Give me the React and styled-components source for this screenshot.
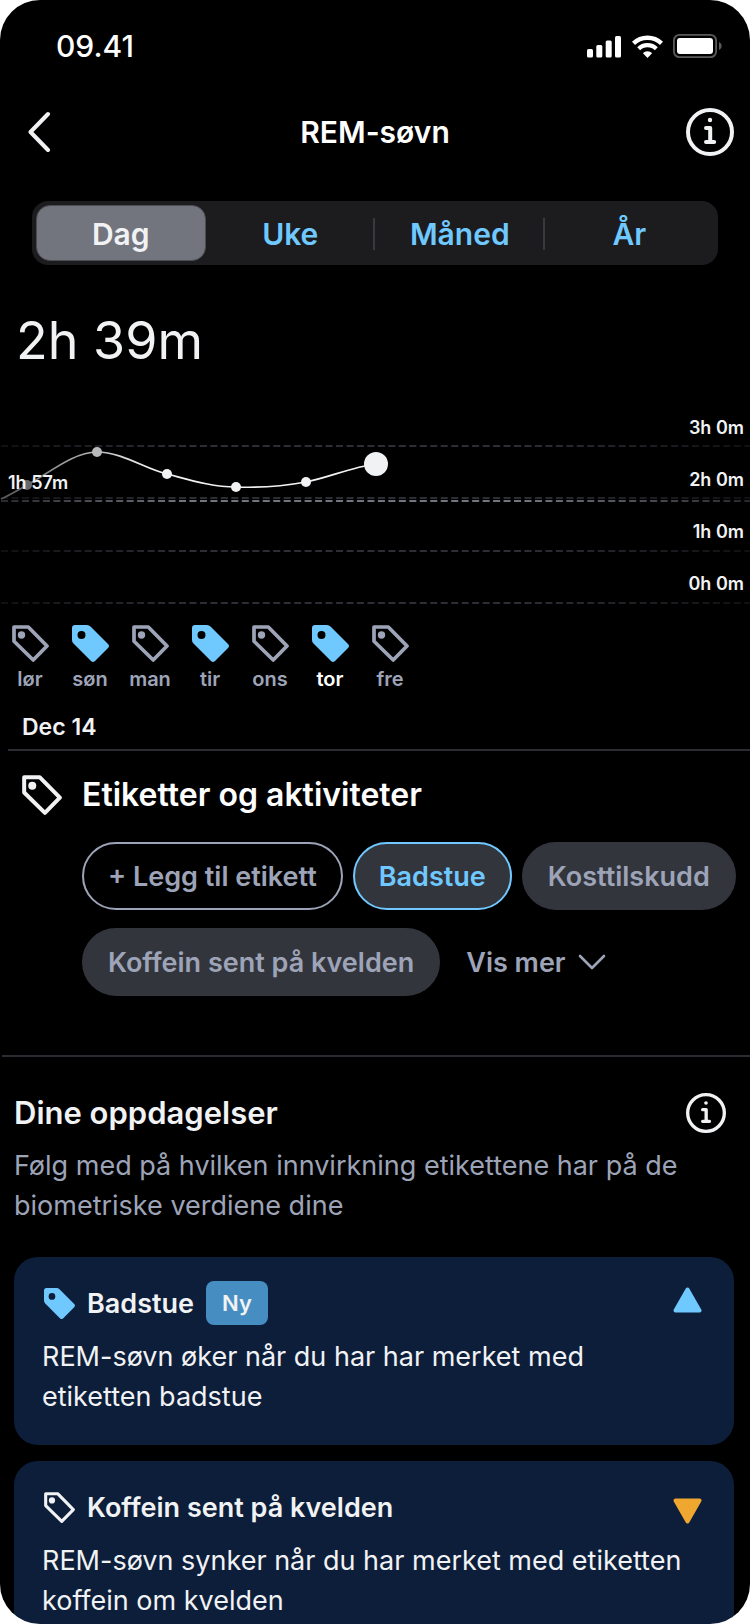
import React, { useState } from "react";
import styled, { createGlobalStyle } from "styled-components";

const PERIODS = ["Dag", "Uke", "Måned", "År"];

const HOURS = ["3h 0m", "2h 0m", "1h 0m", "0h 0m"];

const GRID_LINES = [45, 97, 150, 202];

const POINTS = [
  { x: 27, y: 84, r: 5, color: "#67686a" },
  { x: 97, y: 51, r: 5, color: "#b8b9bb" },
  { x: 167, y: 73, r: 5, color: "#f1f2f4" },
  { x: 236, y: 86, r: 5, color: "#f1f2f4" },
  { x: 306, y: 81, r: 5, color: "#f1f2f4" },
  { x: 376, y: 63, r: 12, color: "#f1f2f4" },
];

const DAYS = [
  { name: "lør", tagged: false },
  { name: "søn", tagged: true },
  { name: "man", tagged: false },
  { name: "tir", tagged: true },
  { name: "ons", tagged: false },
  { name: "tor", tagged: true, current: true },
  { name: "fre", tagged: false },
];

const DISCOVERIES = [
  {
    title: "Badstue",
    text: "REM-søvn øker når du har har merket med etiketten badstue",
    trend: "up",
    isNew: true,
  },
  {
    title: "Koffein sent på kvelden",
    text: "REM-søvn synker når du har merket med etiketten koffein om kvelden",
    trend: "down",
    isNew: false,
  },
];

function TagIcon({ size, filled }) {
  return (
    <svg width={size} height={size} viewBox="0 0 37 37" aria-hidden="true">
      {filled ? (
        <path
          fill="currentColor"
          fillRule="evenodd"
          d="M3 0H15Q17 0 18.500 1.500L36 19Q38 21 36 23L23 36Q21 38 19 36L1.500 18.500Q0 17 0 15V3Q0 0 3 0ZM9.500 6A4 4 0 1 0 9.500 14A4 4 0 1 0 9.500 6Z"
        />
      ) : (
        <>
          <path
            fill="none"
            stroke="currentColor"
            strokeWidth="3.7"
            strokeLinejoin="round"
            d="M2 2H16.300L35 21L21.200 35L2 16.200Z"
          />
          <circle cx="9.500" cy="10" r="3.700" fill="currentColor" />
        </>
      )}
    </svg>
  );
}

function InfoIcon({ size }) {
  return (
    <svg width={size} height={size} viewBox="0 0 48 48" fill="none" aria-hidden="true">
      <circle cx="24" cy="24" r="22" stroke="currentColor" strokeWidth="4" />
      <circle cx="24" cy="12" r="2.2" fill="currentColor" />
      <path
        d="M20 20H24.200V34M20 34H28.200"
        stroke="currentColor"
        strokeWidth="4"
        strokeLinecap="round"
        strokeLinejoin="round"
      />
    </svg>
  );
}

function StatusIcons() {
  return (
    <StatusGroup>
      <svg width="35" height="23" viewBox="0 0 35 23" fill="#fff" aria-hidden="true">
        <rect x="0" y="14" width="6" height="8.500" rx="1.500" />
        <rect x="9.300" y="10" width="6" height="12.500" rx="1.500" />
        <rect x="18.700" y="5.500" width="6" height="17" rx="1.500" />
        <rect x="28" y="1" width="6" height="21.500" rx="1.500" />
      </svg>
      <svg width="31" height="23" viewBox="0 0 31 23" fill="none" aria-hidden="true">
        <clipPath id="wedge">
          <path d="M15.500 23L-7.500 -1H38.500Z" />
        </clipPath>
        <g clipPath="url(#wedge)">
          <circle cx="15.500" cy="23" r="20.300" stroke="#fff" strokeWidth="4.400" />
          <circle cx="15.500" cy="23" r="12.800" stroke="#fff" strokeWidth="4.200" />
          <circle cx="15.500" cy="23" r="6.700" fill="#fff" />
        </g>
      </svg>
      <svg width="49" height="24" viewBox="0 0 49 24" fill="none" aria-hidden="true">
        <rect x="0.900" y="0.900" width="42.200" height="22.200" rx="5.500" stroke="#5a5a5a" strokeWidth="1.800" />
        <rect x="4" y="4" width="36" height="16" rx="3" fill="#fff" />
        <path d="M46 8V16C49.500 14.500 49.500 9.500 46 8Z" fill="#5a5a5a" />
      </svg>
    </StatusGroup>
  );
}

function TrendIcon({ trend }) {
  const up = trend === "up";
  const color = up ? "#6fc9ff" : "#efa730";
  return (
    <svg width="29" height="26" viewBox="0 0 29 26" role="img" aria-label={up ? "Øker" : "Synker"}>
      <path
        d={up ? "M14.500 2.500L26.500 23.500H2.500Z" : "M14.500 23.500L26.500 2.500H2.500Z"}
        fill={color}
        stroke={color}
        strokeWidth="4"
        strokeLinejoin="round"
      />
    </svg>
  );
}

function SleepChart() {
  return (
    <Chart>
      <Plot aria-hidden="true">
        <defs>
          <linearGradient id="edges">
            <stop offset="0" stopColor="#fff" stopOpacity="0.35" />
            <stop offset="0.25" stopColor="#fff" />
            <stop offset="0.7" stopColor="#fff" />
            <stop offset="1" stopColor="#fff" stopOpacity="0.35" />
          </linearGradient>
          <linearGradient id="trend" gradientUnits="userSpaceOnUse" x1="0" y1="0" x2="150" y2="0">
            <stop offset="0" stopColor="#555659" />
            <stop offset="1" stopColor="#f1f2f4" />
          </linearGradient>
          <mask id="fade" maskUnits="userSpaceOnUse" x="0" y="0" width="100%" height="100%">
            <rect width="100%" height="100%" fill="url(#edges)" />
          </mask>
        </defs>
        <g mask="url(#fade)" strokeDasharray="7 3.47" strokeWidth="2">
          {GRID_LINES.map((y) => (
            <line key={y} x1="1" x2="100%" y1={y} y2={y} stroke="#2d2e35" />
          ))}
          <line x1="1" x2="100%" y1="100" y2="100" stroke="#72747f" />
        </g>
        <path
          d="M1 98C10 94 18 89 27 84C48 73 73 51 97 51C122 51 145 68 167 73C190 79 212 86 236 86C260 87 284 85 306 81C330 76 352 66 376 63"
          fill="none"
          stroke="url(#trend)"
          strokeWidth="1.700"
        />
        {POINTS.map((p) => (
          <circle key={p.x} cx={p.x} cy={p.y} r={p.r} fill={p.color} />
        ))}
      </Plot>
      <Average>1h 57m</Average>
      <Hours>
        {HOURS.map((hour) => (
          <li key={hour}>{hour}</li>
        ))}
      </Hours>
    </Chart>
  );
}

function App() {
  const [period, setPeriod] = useState("Dag");

  return (
    <>
      <GlobalStyle />
      <Screen>
        <StatusBar>
          <time>09.41</time>
          <StatusIcons />
        </StatusBar>

        <Header>
          <IconButton aria-label="Tilbake">
            <svg width="24" height="42" viewBox="0 0 24 42" fill="none" aria-hidden="true">
              <path
                d="M20 3L2.500 21L20 39"
                stroke="currentColor"
                strokeWidth="4"
                strokeLinecap="round"
                strokeLinejoin="round"
              />
            </svg>
          </IconButton>
          <h1>REM-søvn</h1>
          <IconButton aria-label="Informasjon">
            <InfoIcon size={48} />
          </IconButton>
        </Header>

        <Segments>
          {PERIODS.map((name) => (
            <Segment
              key={name}
              $active={name === period}
              aria-pressed={name === period}
              onClick={() => setPeriod(name)}
            >
              {name}
            </Segment>
          ))}
        </Segments>

        <Total>2h 39m</Total>
        <SleepChart />

        <Days>
          {DAYS.map((day) => (
            <Day key={day.name} $tagged={day.tagged} $current={day.current}>
              <TagIcon size={37} filled={day.tagged} />
              <span>{day.name}</span>
            </Day>
          ))}
        </Days>
        <DateLabel>Dec 14</DateLabel>

        <Section $inset={8}>
          <TagsHeading>
            <TagIcon size={40} />
            <Title>Etiketter og aktiviteter</Title>
          </TagsHeading>
          <Chips>
            <Chip $variant="outline">+ Legg til etikett</Chip>
            <Chip $variant="selected">Badstue</Chip>
            <Chip>Kosttilskudd</Chip>
            <Chip>Koffein sent på kvelden</Chip>
            <Chip $variant="plain">
              Vis mer
              <svg width="28" height="16" viewBox="0 0 28 16" fill="none" aria-hidden="true">
                <path
                  d="M2 2L14 14L26 2"
                  stroke="currentColor"
                  strokeWidth="2.600"
                  strokeLinecap="round"
                  strokeLinejoin="round"
                />
              </svg>
            </Chip>
          </Chips>
        </Section>

        <Section $inset={2}>
          <DiscoveriesHeading>
            <Title>Dine oppdagelser</Title>
            <IconButton aria-label="Om oppdagelser">
              <InfoIcon size={40} />
            </IconButton>
          </DiscoveriesHeading>
          <Intro>Følg med på hvilken innvirkning etikettene har på de biometriske verdiene dine</Intro>
          <Cards>
            {DISCOVERIES.map((item) => (
              <Card key={item.title}>
                <CardHead $tagged={item.isNew}>
                  <TagIcon size={31} filled={item.isNew} />
                  <h3>{item.title}</h3>
                  {item.isNew && <Badge>Ny</Badge>}
                  <Trend $down={item.trend === "down"}>
                    <TrendIcon trend={item.trend} />
                  </Trend>
                </CardHead>
                <p>{item.text}</p>
              </Card>
            ))}
          </Cards>
        </Section>
      </Screen>
    </>
  );
}

export default App;

const GlobalStyle = createGlobalStyle`
  * {
    box-sizing: border-box;
  }

  body {
    margin: 0;
    background: #fff;
    font-family: Inter, "Liberation Sans", sans-serif;
  }

  h1, h2, h3, p, ul {
    margin: 0;
    padding: 0;
  }

  button {
    font: inherit;
    cursor: pointer;
  }

  svg {
    display: block;
    flex-shrink: 0;
  }
`;

const Screen = styled.main`
  height: 100vh;
  overflow-y: auto;
  scrollbar-width: none;
  border-radius: 40px;
  background: #000;
  color: #f1f2f4;
`;

const StatusBar = styled.div`
  display: flex;
  align-items: center;
  justify-content: space-between;
  height: 92px;
  padding: 0 28px 0 56px;
  color: #fff;
  font-size: 30px;
  font-weight: 500;
`;

const StatusGroup = styled.div`
  display: flex;
  align-items: center;
  gap: 10px;
`;

const Header = styled.header`
  display: flex;
  align-items: center;
  justify-content: space-between;
  height: 80px;
  padding: 0 16px;

  h1 {
    color: #fff;
    font-size: 30px;
    font-weight: 600;
  }
`;

const IconButton = styled.button`
  display: flex;
  align-items: center;
  justify-content: center;
  min-width: 40px;
  padding: 0;
  border: 0;
  background: none;
  color: #f1f2f4;

  ${Header} & {
    width: 48px;
  }
`;

const Segments = styled.div`
  display: grid;
  grid-template-columns: repeat(4, 1fr);
  height: 64px;
  margin: 29px 32px 0;
  padding: 4px;
  border-radius: 16px;
  background: #1c1c1e;
`;

const Segment = styled.button`
  display: flex;
  align-items: center;
  justify-content: center;
  position: relative;
  padding: 2px 0 0;
  border: 1px solid ${(props) => (props.$active ? "#4b4c53" : "transparent")};
  border-radius: 14px;
  background: ${(props) => (props.$active ? "#72757e" : "none")};
  color: ${(props) => (props.$active ? "#f1f2f4" : "#6fc9ff")};
  font-size: 30px;
  font-weight: 600;

  &:nth-child(n + 3)::before {
    content: "";
    position: absolute;
    left: -3px;
    height: 32px;
    border-left: 2px solid #39393d;
  }
`;

const Total = styled.p`
  margin-top: 44px;
  padding-left: 16px;
  font-size: 52px;
  line-height: 64px;
`;

const Chart = styled.div`
  position: relative;
  margin-top: 28px;
  font-size: 18px;
  font-weight: 600;
`;

const Plot = styled.svg`
  position: absolute;
  width: 100%;
  height: 100%;
`;

const Average = styled.span`
  position: absolute;
  top: 70px;
  left: 8px;
  line-height: 24px;
`;

const Hours = styled.ul`
  position: relative;
  padding: 1px 6px 5px 0;
  list-style: none;
  text-align: right;

  li {
    line-height: 52px;
  }
`;

const Days = styled.div`
  display: flex;
  padding-top: 10px;
`;

const Day = styled.div`
  display: flex;
  flex-direction: column;
  align-items: center;
  gap: 5px;
  width: 60px;
  color: ${(props) => (props.$tagged ? "#6fc9ff" : "#9ea4b8")};

  span {
    color: ${(props) => (props.$current ? "#fff" : "#9ea4b8")};
    font-size: 20px;
    font-weight: 600;
    line-height: 24px;
  }
`;

const DateLabel = styled.p`
  padding: 20px 22px 6px;
  font-size: 23px;
  font-weight: 600;
  line-height: 32px;
`;

const Section = styled.section`
  &::before {
    content: "";
    display: block;
    height: 2px;
    margin-left: ${(props) => props.$inset}px;
    background: #2b2c32;
  }
`;

const Title = styled.h2`
  font-size: 31px;
  font-weight: 600;
  line-height: 40px;
`;

const TagsHeading = styled.div`
  display: flex;
  align-items: center;
  gap: 20px;
  padding: 24px 22px 0;

  ${Title} {
    color: #fff;
    font-size: 32px;
  }
`;

const Chips = styled.div`
  display: flex;
  flex-wrap: wrap;
  gap: 18px 10px;
  padding: 27px 8px 59px 82px;
`;

const chipColors = {
  outline: { border: "#9ea4b8", background: "none", text: "#9ea4b8" },
  selected: { border: "#6fc9ff", background: "#33353d", text: "#6fc9ff" },
  filled: { border: "#33353d", background: "#33353d", text: "#9ea4b8" },
  plain: { border: "transparent", background: "none", text: "#9ea4b8" },
};

const Chip = styled.button`
  display: flex;
  align-items: center;
  gap: 12px;
  height: 68px;
  padding: 0 ${(props) => (props.$variant === "plain" ? 14 : 24)}px;
  border: 2px solid ${(props) => chipColors[props.$variant || "filled"].border};
  border-radius: 34px;
  background: ${(props) => chipColors[props.$variant || "filled"].background};
  color: ${(props) => chipColors[props.$variant || "filled"].text};
  font-size: 27px;
  font-weight: 600;
  white-space: nowrap;
`;

const DiscoveriesHeading = styled.div`
  display: flex;
  align-items: center;
  justify-content: space-between;
  padding: 36px 24px 0 14px;
`;

const Intro = styled.p`
  padding: 13px 14px 0;
  color: #9ea4b8;
  font-size: 27px;
  line-height: 40px;
`;

const Cards = styled.div`
  display: flex;
  flex-direction: column;
  gap: 16px;
  padding: 31px 16px 32px 14px;
`;

const Card = styled.article`
  padding: 24px 28px 28px;
  border-radius: 24px;
  background: #0d1e3a;

  p {
    padding: 12px 16px 0 0;
    font-size: 27px;
    line-height: 40px;
  }
`;

const CardHead = styled.div`
  display: flex;
  align-items: center;
  gap: 12px;
  height: 44px;
  padding-left: 2px;

  > svg {
    color: ${(props) => (props.$tagged ? "#6fc9ff" : "#f1f2f4")};
  }

  h3 {
    font-size: 27px;
    font-weight: 600;
  }
`;

const Badge = styled.span`
  padding: 0 16px;
  border-radius: 8px;
  background: #468dc2;
  font-size: 22px;
  font-weight: 600;
  line-height: 44px;
`;

const Trend = styled.span`
  margin-left: auto;
  padding: ${(props) => (props.$down ? "7px 4px 0 0" : "0 4px 6px 0")};
`;
